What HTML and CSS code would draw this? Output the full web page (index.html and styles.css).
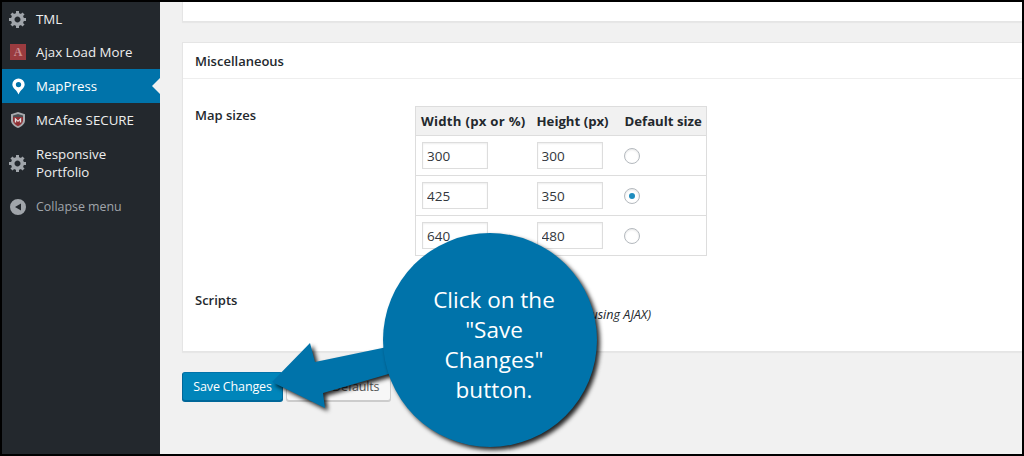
FILE: index.html
```html
<!DOCTYPE html>
<html lang="en">
<head>
<meta charset="utf-8">
<title>MapPress settings</title>
<link rel="stylesheet" href="styles.css">
</head>
<body>
<svg class="defs" width="0" height="0" aria-hidden="true">
  <symbol id="gear" viewBox="0 0 20 20"><path d="M18 12h-2.18c-.17.7-.44 1.35-.81 1.93l1.54 1.54-2.1 2.1-1.54-1.54c-.58.36-1.23.63-1.91.79V19H8v-2.18c-.68-.16-1.33-.43-1.91-.79l-1.54 1.54-2.12-2.12 1.54-1.54c-.36-.58-.63-1.23-.79-1.91H1V9.03h2.17c.16-.7.44-1.35.8-1.94L2.43 5.55l2.1-2.1 1.54 1.54c.58-.37 1.24-.64 1.93-.81V2h3v2.18c.68.16 1.33.43 1.91.79l1.54-1.54 2.12 2.12-1.54 1.54c.36.59.64 1.24.8 1.94H18V12zm-8.500 1.500c1.660 0 3-1.340 3-3s-1.340-3-3-3-3 1.340-3 3 1.340 3 3 3z"/></symbol>
</svg>
<div class="frame">
  <nav class="menu">
    <a class="item first"><span class="ico"><svg class="gear"><use href="#gear"/></svg></span><span>TML</span></a>
    <a class="item"><span class="ico"><span class="ajax">A</span></span><span>Ajax Load More</span></a>
    <a class="item active"><span class="ico"><svg class="pin" viewBox="0 0 20 20"><path fill-rule="evenodd" d="M10 1.500A6.500 6.500 0 0 0 3.500 8c0 2 1.200 3.600 2.600 4.900 1.500 1.400 3 3.100 3.900 5.600.9-2.500 2.400-4.200 3.900-5.600 1.400-1.300 2.600-2.900 2.600-4.900A6.500 6.500 0 0 0 10 1.500zm0 3.700a2.800 2.800 0 1 1 0 5.600 2.800 2.800 0 0 1 0-5.600z"/></svg></span><span>MapPress</span></a>
    <a class="item"><span class="ico"><svg class="shield" viewBox="0 0 16 16"><path fill="#a7aaad" d="M8 0l7 2.200v6.300C15 12 11.500 14.500 8 16 4.500 14.500 1 12 1 8.500V2.200z"/><path fill="#4b4f54" d="M8 2l5 1.500V5H3V3.500z"/><path fill="#8e2f33" d="M3 5h10v3.500C13 11 10.500 13 8 14.200 5.500 13 3 11 3 8.500z"/><path fill="#e6e6e6" d="M4.800 10.500V5.500l3.200 3 3.200-3v5h-1.400V8.300L8 10 6.200 8.300v2.200z"/></svg></span><span>McAfee SECURE</span></a>
    <a class="item tall"><span class="ico"><svg class="gear"><use href="#gear"/></svg></span><span>Responsive<br>Portfolio</span></a>
    <a class="item collapse"><span class="ico"><svg class="circle" viewBox="0 0 16 16"><path fill-rule="evenodd" d="M8 0a8 8 0 1 1 0 16A8 8 0 0 1 8 0zm3 4.500L5 8l6 3.500z"/></svg></span><span>Collapse menu</span></a>
  </nav>
  <main class="content">
    <div class="panel stub"></div>
    <section class="panel">
      <h2 class="panel-title">Miscellaneous</h2>
      <div class="panel-body">
        <div class="row sizes">
          <div class="label">Map sizes</div>
          <table class="size-table">
            <thead>
              <tr><th class="col-w">Width (px or %)</th><th class="col-h">Height (px)</th><th>Default size</th></tr>
            </thead>
            <tbody>
              <tr>
                <td><input class="num" type="text" value="300"></td>
                <td><input class="num" type="text" value="300"></td>
                <td><span class="radio"></span></td>
              </tr>
              <tr>
                <td><input class="num" type="text" value="425"></td>
                <td><input class="num" type="text" value="350"></td>
                <td><span class="radio on"></span></td>
              </tr>
              <tr>
                <td><input class="num" type="text" value="640"></td>
                <td><input class="num" type="text" value="480"></td>
                <td><span class="radio"></span></td>
              </tr>
            </tbody>
          </table>
        </div>
        <div class="row scripts">
          <div class="label">Scripts</div>
          <div class="note"><em>Check for conflicts (when using AJAX)</em></div>
        </div>
      </div>
    </section>
    <div class="actions">
      <button class="btn primary" type="button">Save Changes</button>
      <button class="btn secondary" type="button">Reset Defaults</button>
    </div>
  </main>
</div>
<svg class="arrow" viewBox="0 0 1024 456" aria-hidden="true">
  <path d="M272 382L310 343 315 362 392 346 392 373 323 393 325 408z"/>
</svg>
<div class="bubble"><p>Click on the<br>"Save<br>Changes"<br>button.</p></div>
</body>
</html>
```
FILE: styles.css
```css
* { box-sizing: border-box; }
html, body { margin: 0; padding: 0; }
body {
  position: relative;
  width: 1024px;
  height: 456px;
  overflow: hidden;
  font-family: "Open Sans", "Liberation Sans", sans-serif;
  font-size: 13px;
  color: #23282d;
  background: #000;
}
.defs { position: absolute; }
.frame {
  display: flex;
  width: 1024px;
  height: 456px;
  border: 2px solid #000;
  background: #f1f1f1;
  overflow: hidden;
}
.menu {
  flex: none;
  width: 158px;
  background: #23282d;
  color: #eee;
  font-size: 13.3px;
}
.item {
  position: relative;
  display: flex;
  align-items: center;
  height: 34px;
  line-height: 18px;
}
.item.first { height: 33px; }
.item.tall { height: 52px; }
.item.collapse { height: 35px; padding-top: 1px; color: #a0a5aa; font-size: 12.4px; }
.item.active { background: #0073aa; color: #fff; }
.item.active::after {
  content: "";
  position: absolute;
  right: 0;
  top: 9px;
  border: 8px solid transparent;
  border-right-color: #f1f1f1;
  border-left: 0;
}
.ico {
  flex: none;
  width: 32px;
  margin-right: 2px;
  display: flex;
  justify-content: center;
  align-items: center;
}
.gear { width: 20px; height: 20px; fill: #a0a5aa; }
.pin { width: 19px; height: 19px; fill: #fff; }
.shield { width: 16px; height: 16px; }
.circle { width: 16px; height: 16px; fill: #a0a5aa; }
.ajax {
  width: 16px;
  height: 16px;
  background: #9a3b3f;
  color: #c98d8f;
  font: bold 12px/16px "Liberation Serif", serif;
  text-align: center;
}
.content {
  flex: 1;
  min-width: 0;
  padding-left: 22px;
}
.panel {
  width: 860px;
  background: #fff;
  border: 1px solid #e5e5e5;
  box-shadow: 0 1px 1px rgba(0,0,0,.04);
}
.stub { height: 20px; border-top: 0; margin-bottom: 20px; }
.panel-title {
  margin: 0;
  height: 36px;
  padding: 0 12px;
  font-size: 13px;
  font-weight: 600;
  line-height: 36px;
  border-bottom: 1px solid #eee;
}
.panel-body { height: 272px; padding: 0 12px; }
.row { display: flex; }
.label {
  flex: none;
  width: 220px;
  font-weight: 600;
  line-height: 18px;
}
.sizes { padding-top: 27px; }
.size-table {
  table-layout: fixed;
  width: 292px;
  height: 150px;
  border-collapse: collapse;
  border: 1px solid #ddd;
}
.size-table th {
  height: 29px;
  padding: 0 6px;
  background: #f1f1f1;
  border-bottom: 1px solid #ddd;
  font-size: 13.2px;
  font-weight: 700;
  text-align: left;
  white-space: nowrap;
}
.size-table .col-w { width: 115px; padding-left: 5px; letter-spacing: .25px; }
.size-table .col-h { width: 88px; }
.size-table td {
  height: 40px;
  padding: 0 6px;
  border-bottom: 1px solid #ddd;
}
.num {
  display: block;
  width: 66px;
  height: 27px;
  padding: 0 4px;
  border: 1px solid #ddd;
  box-shadow: inset 0 1px 2px rgba(0,0,0,.07);
  font: 13.5px "Open Sans", "Liberation Sans", sans-serif;
  color: #32373c;
  background: #fff;
}
.radio {
  display: flex;
  align-items: center;
  justify-content: center;
  width: 16px;
  height: 16px;
  margin-left: -1px;
  border: 1px solid #b4b9be;
  border-radius: 50%;
  background: #fff;
  box-shadow: inset 0 1px 2px rgba(0,0,0,.1);
}
.radio.on::before {
  content: "";
  width: 6px;
  height: 6px;
  border-radius: 50%;
  background: #1e8cbe;
}
.scripts { padding-top: 35px; line-height: 18px; }
.note {
  display: flex;
  justify-content: flex-end;
  width: 236px;
  padding-top: 6px;
  font-size: 12.6px;
  white-space: nowrap;
  margin-top: 9px;
}
.actions {
  display: flex;
  gap: 3px;
  margin-top: 20px;
}
.btn {
  height: 29px;
  padding: 0;
  border: 1px solid #ccc;
  border-radius: 3px;
  background: #f7f7f7;
  box-shadow: 0 1px 0 #ccc;
  color: #555;
  font: 12.5px "Open Sans", "Liberation Sans", sans-serif;
  letter-spacing: -0.15px;
}
.btn.secondary { width: 105px; }
.btn.primary {
  width: 101px;
  background: #0085ba;
  border-color: #0073aa #006799 #006799;
  box-shadow: 0 1px 0 #006799;
  color: #fff;
}
.arrow {
  position: absolute;
  left: 0;
  top: 0;
  width: 1024px;
  height: 456px;
  fill: #0073aa;
  filter: drop-shadow(3px 3px 2px rgba(0,0,0,.85));
}
.bubble {
  position: absolute;
  left: 383px;
  top: 233px;
  width: 214px;
  height: 214px;
  display: flex;
  align-items: center;
  justify-content: center;
  border-radius: 50%;
  background: #0073aa;
  box-shadow: 3px 3px 4px rgba(0,0,0,.85);
  color: #fff;
  text-align: center;
}
.bubble p {
  margin: 0;
  padding: 10px 0 0 8px;
  font-size: 22.5px;
  line-height: 30px;
}
```
